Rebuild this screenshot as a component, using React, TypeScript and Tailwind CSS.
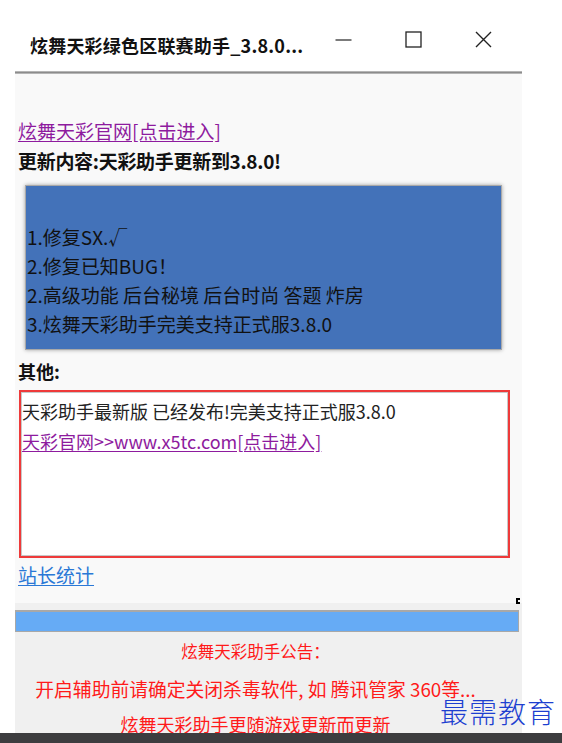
export default function App() {
  const cjk = { fontFamily: '"Microsoft YaHei", "Noto Sans CJK SC", sans-serif' }
  return (
    <div className="relative w-[562px] h-[743px] bg-white overflow-hidden" style={cjk}>
      <div className="ml-[15px] w-[507px]">
        {/* title bar */}
        <div className="h-[71px] flex items-start bg-white">
          <div className="pl-[15px] pt-[32px] text-[18px] leading-[26px] font-bold text-[#111] w-[320px] whitespace-nowrap tracking-[0.2px]">
            炫舞天彩绿色区联赛助手_3.8.0...
          </div>
          <div className="flex items-center pt-[31px] gap-[53px]">
            <svg width="17" height="17" viewBox="0 0 17 17">
              <line x1="0.5" y1="9" x2="16.5" y2="9" stroke="#222" strokeWidth="1.2" />
            </svg>
            <svg width="17" height="17" viewBox="0 0 17 17">
              <rect x="1" y="1" width="15" height="15" fill="none" stroke="#222" strokeWidth="1.3" />
            </svg>
            <svg width="17" height="17" viewBox="0 0 17 17">
              <path d="M1 1 L16 16 M16 1 L1 16" stroke="#222" strokeWidth="1.4" />
            </svg>
          </div>
        </div>
        <div className="h-[3px] bg-[#8c8c8c] border-y border-[#b5b5b5]" />

        {/* body */}
        <div className="bg-[#f9f9f9] pl-[3px] pt-[45px] h-[529px]">
          <a className="block h-[24px] leading-[24px] text-[19px] text-[#8e1b9e] underline underline-offset-2 w-fit">
            炫舞天彩官网[点击进入]
          </a>
          <div className="mt-[6px] h-[24px] leading-[24px] text-[19px] font-bold text-[#111] tracking-[-0.3px]">
            更新内容:天彩助手更新到3.8.0!
          </div>
          <div className="ml-[7px] mt-[12px] w-[477px] h-[165px] bg-[#4372b9] border border-[#a9a9a9] shadow-[0_0_4px_rgba(0,0,0,0.35)] pt-[36px] pl-[1px] text-[19px] leading-[29px] text-[#111]">
            <div>1.修复SX.√</div>
            <div>2.修复已知BUG！</div>
            <div>2.高级功能 后台秘境 后台时尚 答题 炸房</div>
            <div>3.炫舞天彩助手完美支持正式服3.8.0</div>
          </div>
          <div className="mt-[9px] h-[24px] leading-[24px] text-[18px] font-bold text-[#111]">其他:</div>
          <div className="ml-[1px] mt-[7px] w-[491px] h-[168px] border-2 border-[#ee3a3a]">
            <div className="h-full border border-[#c8c8c8] bg-white pl-0 pt-[3px] text-[18px] leading-[30px]">
              <div className="text-[#222]">天彩助手最新版 已经发布!完美支持正式服3.8.0</div>
              <a className="text-[#8e1b9e] underline underline-offset-2">天彩官网&gt;&gt;www.x5tc.com[点击进入]</a>
            </div>
          </div>
          <a className="block mt-[5px] h-[24px] leading-[24px] text-[19px] text-[#2a78d6] underline underline-offset-2 w-fit">
            站长统计
          </a>
        </div>

        {/* notice area */}
        <div className="bg-[#f0f0f0] h-[130px] pt-[7px] relative">
          <div className="absolute right-[2px] -top-[5px] w-[4px] h-[6px] border-2 border-r-0 border-black" />
          <div className="w-[504px] h-[22px] bg-[#66abf5] border border-[#a8a8a8] border-t-2" />
          <div className="text-center text-[#ff1a1a] pr-[26px]" style={{ fontFamily: '"SimSun", "Noto Sans CJK SC", sans-serif' }}>
            <div className="mt-[6px] leading-[26px] text-[16.5px]">炫舞天彩助手公告：</div>
            <div className="mt-[12px] leading-[26px] text-[18.8px] whitespace-nowrap">开启辅助前请确定关闭杀毒软件, 如 腾讯管家 360等...</div>
            <div className="mt-[9px] leading-[26px] text-[18px]">炫舞天彩助手更随游戏更新而更新</div>
          </div>
        </div>
      </div>

      <div className="absolute left-0 bottom-0 w-full h-[10px] bg-[#3d3d3f]" />
      <div className="absolute left-[440px] top-[694px] text-[28px] leading-[34px] tracking-[1px] text-[#1d3fd0] font-light" style={{ fontFamily: '"KaiTi", "Noto Sans CJK SC", serif' }}>
        最需教育
      </div>
    </div>
  )
}
